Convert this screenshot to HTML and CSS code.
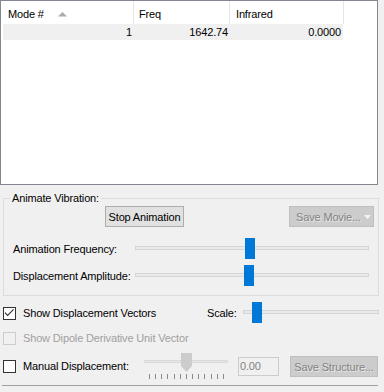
FILE: index.html
```html
<!DOCTYPE html>
<html>
<head>
<meta charset="utf-8">
<link rel="stylesheet" href="styles.css">
</head>
<body>
<div class="panel">
  <div class="list">
    <div class="list-head">
      <div class="hcell c1"><span>Mode #</span><svg class="sort" width="9" height="5" viewBox="0 0 9 5"><polygon points="0,4.5 4.5,0 9,4.5" fill="#acacac"/></svg></div>
      <div class="hcell c2">Freq</div>
      <div class="hcell c3">Infrared</div>
    </div>
    <div class="list-row">
      <div class="cell c1">1</div>
      <div class="cell c2">1642.74</div>
      <div class="cell c3">0.0000</div>
    </div>
  </div>

  <fieldset class="group">
    <legend>Animate Vibration:</legend>
    <div class="btn-row">
      <button class="btn stop">Stop Animation</button>
      <button class="btn off movie" disabled><span>Save Movie...</span><svg class="drop" width="7" height="4" viewBox="0 0 7 4"><polygon points="0,0 7,0 3.5,4" fill="#f4f4f4"/></svg></button>
    </div>
    <div class="slider-row first">
      <span class="slabel">Animation Frequency:</span>
      <div class="slider wide"><div class="track"></div><div class="thumb" style="left:110px"></div></div>
    </div>
    <div class="slider-row second">
      <span class="slabel">Displacement Amplitude:</span>
      <div class="slider wide"><div class="track"></div><div class="thumb" style="left:109px"></div></div>
    </div>
  </fieldset>

  <div class="opt-row vec">
    <label class="check c-vec">
      <span class="box"><svg width="11" height="11" viewBox="0 0 11 11"><polyline points="1,4.6 3.6,7.4 9.6,1.4" fill="none" stroke="#333" stroke-width="1.1"/></svg></span>
      <span>Show Displacement Vectors</span>
    </label>
    <span class="scale-label">Scale:</span>
    <div class="slider scale"><div class="track"></div><div class="thumb" style="left:9px"></div></div>
  </div>

  <div class="opt-row dipole">
    <label class="check dis">
      <span class="box"></span>
      <span>Show Dipole Derivative Unit Vector</span>
    </label>
  </div>

  <div class="opt-row manual">
    <label class="check c-man">
      <span class="box"></span>
      <span>Manual Displacement:</span>
    </label>
    <div class="mslider">
      <div class="mtrack"></div>
      <div class="ticks">
        <i></i><i></i><i></i><i></i><i></i><i></i><i></i><i></i><i></i><i></i><i></i><i></i><i></i>
      </div>
      <svg class="mthumb" width="11" height="19" viewBox="0 0 11 19"><polygon points="0,0 11,0 11,13 5.5,19 0,13" fill="#cccccc"/></svg>
    </div>
    <div class="tbox">0.00</div>
    <button class="btn off struct" disabled>Save Structure...</button>
  </div>

  <div class="sep"></div>
</div>
</body>
</html>
```

FILE: styles.css
```css
* { box-sizing: border-box; }
html, body { margin: 0; padding: 0; }
body {
  width: 384px;
  height: 392px;
  overflow: hidden;
  background: #f0f0f0;
  font-family: "Liberation Sans", Arial, sans-serif;
  font-size: 11px;
  letter-spacing: -0.15px;
  color: #000;
}
.panel { display: flex; flex-direction: column; }

/* list view */
.list {
  width: 378px;
  height: 185px;
  border: 1px solid #828790;
  background: #fff;
}
.list-head { display: flex; height: 23px; }
.hcell {
  height: 23px;
  padding-top: 7px;
  line-height: 13px;
  border-right: 1px solid #e5e5e5;
  display: flex;
  align-items: flex-start;
}
.hcell.c1 { width: 133px; padding-left: 7px; }
.hcell.c2 { width: 96px; padding-left: 5px; }
.hcell.c3 { width: 114px; padding-left: 6px; }
.sort { margin: 4px 0 0 14px; }
.list-row {
  display: flex;
  width: 340px;
  height: 16px;
  margin-left: 2px;
  background: #f0f0f0;
  line-height: 16px;
}
.cell { text-align: right; padding-right: 2px; }
.cell.c1 { width: 131px; }
.cell.c2 { width: 96px; }
.cell.c3 { width: 113px; }

/* group box */
.group {
  margin: 6px 5px 0 3px;
  padding: 0 0 9px 0;
  border: 1px solid #dcdcdc;
  min-width: 0;
}
.group legend {
  padding: 0 2px;
  margin-left: 6px;
  line-height: 15px;
}
.btn-row {
  display: flex;
  justify-content: space-between;
  height: 21px;
  padding: 0 4px 0 101px;
}
.btn {
  height: 21px;
  padding: 0;
  font: inherit;
  letter-spacing: inherit;
  color: #000;
  background: #e1e1e1;
  border: 1px solid #adadad;
  border-radius: 0;
}
.btn.off {
  background: #cccccc;
  border-color: #bfbfbf;
  color: #838383;
  text-shadow: 1px 1px 0 rgba(255,255,255,0.55);
}
.stop { width: 79px; }
.movie {
  width: 85px;
  display: flex;
  align-items: center;
  justify-content: space-between;
  padding: 0 2px 0 6px;
}
.drop { margin-top: 1px; }

.slider-row {
  display: flex;
  align-items: center;
  height: 21px;
  padding-left: 9px;
}
.slider-row.first { margin-top: 11px; }
.slider-row.second { margin-top: 6px; }
.slabel { width: 122px; }
.slider { position: relative; height: 21px; }
.slider.wide { width: 234px; }
.track {
  margin-top: 8px;
  height: 4px;
  border: 1px solid #d6d6d6;
  background: #e7eaea;
}
.thumb {
  position: absolute;
  top: 0;
  width: 10px;
  height: 21px;
  background: #0078d7;
}

/* option rows */
.opt-row { display: flex; padding-left: 3px; }
.opt-row.vec { margin-top: 6px; height: 21px; align-items: center; }
.opt-row.dipole { margin-top: 8px; height: 15px; align-items: center; }
.opt-row.manual { margin-top: 6px; align-items: flex-start; }

.check { display: flex; align-items: center; gap: 7px; line-height: 15px; }
.box {
  width: 13px;
  height: 13px;
  flex: none;
  border: 1px solid #333333;
  background: #fff;
  display: flex;
}
.check.dis { color: #a0a0a0; }
.check.dis .box { border-color: #cccccc; background: #f0f0f0; }
.c-vec { width: 204px; margin-top: 1px; }
.scale-label { width: 36px; }
.slider.scale { width: 136px; }

.c-man { width: 141px; height: 15px; margin-top: 7px; }
.mslider { position: relative; width: 84px; height: 28px; }
.mtrack {
  margin-top: 8px;
  height: 3px;
  border: 1px solid #dadada;
  background: #e7e7e7;
}
.ticks {
  display: flex;
  justify-content: space-between;
  margin: 11px 4px 0 5px;
  height: 5px;
}
.ticks i { display: block; width: 1px; height: 5px; background: #8a8a8a; }
.mthumb { position: absolute; left: 37px; top: 1px; }

.tbox {
  width: 41px;
  height: 19px;
  margin: 5px 0 0 10px;
  border: 1px solid #cccccc;
  background: #f0f0f0;
  color: #838383;
  padding-left: 1px;
  line-height: 17px;
}
.struct { width: 88px; margin: 4px 0 0 11px; }

.sep {
  margin: 5px 0 0 2px;
  width: 376px;
  height: 1px;
  background: #a0a0a0;
}
```
